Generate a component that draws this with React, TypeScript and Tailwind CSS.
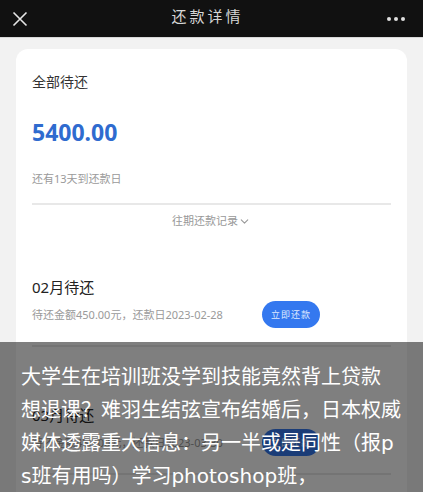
import { ChevronDown } from "lucide-react";

const cjk = "font-['Noto_Sans','Noto_Sans_CJK_SC',sans-serif]";

function Bill({ month, date }: { month: string; date: string }) {
  return (
    <div>
      <div className="text-[15px] leading-[22px] text-[#222]">{month}月待还</div>
      <div className="mt-[3px] flex items-center">
        <div className="w-[230px] text-[11px] leading-[16px] text-[#9a9a9a]">
          待还金额450.00元，还款日{date}
        </div>
        <button className="h-[27px] w-[58px] rounded-full bg-[#3478ef] text-[9px] tracking-[1px] text-[#dfe9ff]">
          立即还款
        </button>
      </div>
    </div>
  );
}

export default function App() {
  return (
    <div className={`relative h-[492px] w-[423px] overflow-hidden bg-[#f2f2f2] ${cjk}`}>
      <div className="flex h-[38px] items-center justify-between border-b border-[#d8d8d8] bg-[#111] pl-[12px] pr-[18px]">
        <svg width="16" height="16" viewBox="0 0 16 16" className="text-[#e6e6e6]">
          <path d="M1.5 1.5 L14.5 14.5 M14.5 1.5 L1.5 14.5" stroke="currentColor" strokeWidth="1.6" />
        </svg>
        <div className="-mt-1 text-[15px] tracking-[3px] text-[#d6d6d6]">还款详情</div>
        <div className="flex gap-[3px]">
          <span className="h-[4px] w-[4px] rounded-full bg-[#e0e0e0]" />
          <span className="h-[4px] w-[4px] rounded-full bg-[#e0e0e0]" />
          <span className="h-[4px] w-[4px] rounded-full bg-[#e0e0e0]" />
        </div>
      </div>

      <div className="px-4 pt-[11px]">
        <div className="rounded-t-[12px] bg-white px-4 pt-[23px] pb-10">
          <div className="text-[14px] leading-[20px] text-[#333]">全部待还</div>
          <div className="mt-6 text-[23px] font-bold leading-[32px] text-[#2f6bcf]">5400.00</div>
          <div className="mt-[23px] text-[11px] leading-[16px] text-[#9a9a9a]">还有13天到还款日</div>
          <div className="mt-4 h-[2px] bg-[#e8e8e8]" />
          <div className="mt-2 flex items-center justify-center text-[11px] leading-[16px] text-[#999]">
            往期还款记录
            <ChevronDown className="h-[13px] w-[13px]" strokeWidth={2} />
          </div>

          <div className="mt-[47px]">
            <Bill month="02" date="2023-02-28" />
          </div>
          <div className="mt-[17px] h-[2px] bg-[#e8e8e8]" />
          <div className="mt-[57px]">
            <Bill month="03" date="2023-03-30" />
          </div>
          <div className="mt-[17px] h-[2px] bg-[#e8e8e8]" />
        </div>
      </div>

      <div className="absolute inset-x-0 bottom-0 h-[150px] bg-black/50 pl-[21px] pt-[19px] font-['DejaVu_Sans','Noto_Sans_CJK_SC',sans-serif] text-[20px] leading-[33px] whitespace-nowrap text-white">
        <div>大学生在培训班没学到技能竟然背上贷款</div>
        <div>想退课？难羽生结弦宣布结婚后，日本权威</div>
        <div>媒体透露重大信息：另一半或是同性（报p</div>
        <div>s班有用吗）学习photoshop班，</div>
      </div>
    </div>
  );
}
